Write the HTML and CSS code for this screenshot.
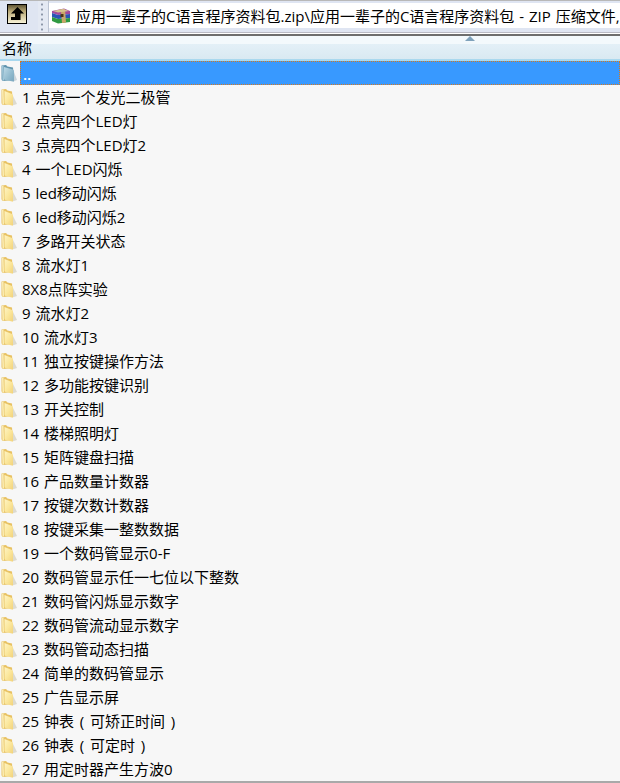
FILE: index.html
```html
<!DOCTYPE html>
<html lang="zh">
<head>
<meta charset="utf-8">
<title>WinRAR</title>
<link rel="stylesheet" href="styles.css">
</head>
<body>
<svg class="defs" width="0" height="0" aria-hidden="true">
  <defs>
    <linearGradient id="fy" x1="0" y1="0" x2="1" y2="1"><stop offset="0" stop-color="#fef4c4"/><stop offset=".5" stop-color="#fbe79c"/><stop offset="1" stop-color="#f2d27a"/></linearGradient>
    <linearGradient id="fb" x1="0" y1="0" x2="1" y2="1"><stop offset="0" stop-color="#bcd9e6"/><stop offset=".6" stop-color="#8fb9cd"/><stop offset="1" stop-color="#7aa6bd"/></linearGradient>
    <symbol id="folder" viewBox="0 0 16 18">
      <path d="M0.500 1.500 L5 1 L6.500 2.500 L11 3.500 L12 16 L2 17 Q0.500 16.500 .5 15 Z" fill="#e8c264"/>
      <path d="M2.500 1.500 L3 16.500 L1.500 16.500 L1 2 Z" fill="#fbeeb8"/>
      <path d="M3.500 3 L11 6 Q12 6.500 12 7.500 L12 17 Q12 18 11 17.600 L4.500 16 Q3.500 15.600 3.500 14.500 Z" fill="url(#fy)"/>
      <path d="M12 8 L16 16 L12 17.200 Z" fill="#d2cfbd" opacity=".7"/>
    </symbol>
    <symbol id="folderup" viewBox="0 0 16 18">
      <path d="M0.500 1.500 L5 1 L6.500 2.500 L12 3.500 L13 16 L2 17 Q0.500 16.500 .5 15 Z" fill="#5f93ad"/>
      <path d="M2.500 1.500 L3 16.500 L1.500 16.500 L1 2 Z" fill="#a6cadb"/>
      <path d="M3 3 L12 5.500 Q13 6 13 7 L13 17 Q13 18 12 17.600 L4 16 Q3 15.600 3 14.500 Z" fill="url(#fb)"/>
      <path d="M13 8 L16 16 L13 17.200 Z" fill="#b9c8d0" opacity=".75"/>
    </symbol>
  </defs>
</svg>
<div class="app">
  <header class="toolbar">
    <div class="up-cell">
      <button class="up-btn" aria-label="向上">
        <svg width="18" height="16" viewBox="0 0 18 16"><path d="M9.500 1 L16 7.500 L12.500 7.500 L12.500 14 L3 14 L3 11 L7 11 L7 7.500 L3 7.500 Z" fill="#000"/></svg>
      </button>
    </div>
    <div class="grip"></div>
    <div class="path">
      <svg class="rar" width="20" height="16" viewBox="0 0 20 16">
        <path d="M1 3 L13 0.500 L19 3 L19 6 L7 7 L1 5 Z" fill="#a34a9c"/>
        <path d="M1 5 L7 7 L19 6 L19 10 L7 11 L1 9 Z" fill="#2b55b5"/>
        <path d="M1 9 L7 11 L19 10 L19 14 L7 15.500 L1 13 Z" fill="#2f9a43"/>
        <path d="M7 2 L14 1 L15 14.500 L11 15 L10 3 Z" fill="#c9a66a"/>
        <path d="M2 3 L12 1 L18 3 L7 4.500 Z" fill="#d6c28e"/>
        <rect x="9.500" y="6" width="3" height="3" fill="#4a3518"/>
      </svg>
      <span class="path-text">应用一辈子的C语言程序资料包.zip\应用一辈子的C语言程序资料包 - ZIP 压缩文件,</span>
    </div>
  </header>
  <div class="rule"></div>
  <div class="head">
    <span class="sort"></span>
    <span class="head-label">名称</span>
  </div>
  <ul class="list">
    <li class="row row-sel"><svg class="ico"><use href="#folderup"/></svg><span class="name">..</span></li>
    <li class="row"><svg class="ico"><use href="#folder"/></svg><span class="name">1 点亮一个发光二极管</span></li>
    <li class="row"><svg class="ico"><use href="#folder"/></svg><span class="name">2 点亮四个LED灯</span></li>
    <li class="row"><svg class="ico"><use href="#folder"/></svg><span class="name">3 点亮四个LED灯2</span></li>
    <li class="row"><svg class="ico"><use href="#folder"/></svg><span class="name">4 一个LED闪烁</span></li>
    <li class="row"><svg class="ico"><use href="#folder"/></svg><span class="name">5 led移动闪烁</span></li>
    <li class="row"><svg class="ico"><use href="#folder"/></svg><span class="name">6 led移动闪烁2</span></li>
    <li class="row"><svg class="ico"><use href="#folder"/></svg><span class="name">7 多路开关状态</span></li>
    <li class="row"><svg class="ico"><use href="#folder"/></svg><span class="name">8 流水灯1</span></li>
    <li class="row"><svg class="ico"><use href="#folder"/></svg><span class="name">8X8点阵实验</span></li>
    <li class="row"><svg class="ico"><use href="#folder"/></svg><span class="name">9 流水灯2</span></li>
    <li class="row"><svg class="ico"><use href="#folder"/></svg><span class="name">10 流水灯3</span></li>
    <li class="row"><svg class="ico"><use href="#folder"/></svg><span class="name">11 独立按键操作方法</span></li>
    <li class="row"><svg class="ico"><use href="#folder"/></svg><span class="name">12 多功能按键识别</span></li>
    <li class="row"><svg class="ico"><use href="#folder"/></svg><span class="name">13 开关控制</span></li>
    <li class="row"><svg class="ico"><use href="#folder"/></svg><span class="name">14 楼梯照明灯</span></li>
    <li class="row"><svg class="ico"><use href="#folder"/></svg><span class="name">15 矩阵键盘扫描</span></li>
    <li class="row"><svg class="ico"><use href="#folder"/></svg><span class="name">16 产品数量计数器</span></li>
    <li class="row"><svg class="ico"><use href="#folder"/></svg><span class="name">17 按键次数计数器</span></li>
    <li class="row"><svg class="ico"><use href="#folder"/></svg><span class="name">18 按键采集一整数数据</span></li>
    <li class="row"><svg class="ico"><use href="#folder"/></svg><span class="name">19 一个数码管显示0-F</span></li>
    <li class="row"><svg class="ico"><use href="#folder"/></svg><span class="name">20 数码管显示任一七位以下整数</span></li>
    <li class="row"><svg class="ico"><use href="#folder"/></svg><span class="name">21 数码管闪烁显示数字</span></li>
    <li class="row"><svg class="ico"><use href="#folder"/></svg><span class="name">22 数码管流动显示数字</span></li>
    <li class="row"><svg class="ico"><use href="#folder"/></svg><span class="name">23 数码管动态扫描</span></li>
    <li class="row"><svg class="ico"><use href="#folder"/></svg><span class="name">24 简单的数码管显示</span></li>
    <li class="row"><svg class="ico"><use href="#folder"/></svg><span class="name">25 广告显示屏</span></li>
    <li class="row"><svg class="ico"><use href="#folder"/></svg><span class="name">25 钟表<span class="paren">(</span>可矫正时间<span class="paren">)</span></span></li>
    <li class="row"><svg class="ico"><use href="#folder"/></svg><span class="name">26 钟表<span class="paren">(</span>可定时<span class="paren">)</span></span></li>
    <li class="row"><svg class="ico"><use href="#folder"/></svg><span class="name">27 用定时器产生方波0</span></li>
  </ul>
  <div class="status"></div>
</div>
</body>
</html>
```
FILE: styles.css
```css
* { box-sizing: border-box; }
html, body { margin: 0; padding: 0; height: 100%; }
body {
  width: 620px;
  height: 783px;
  overflow: hidden;
  background: #f7f7f7;
  font-family: "Open Sans", "Noto Sans CJK SC", sans-serif;
  font-size: 15px;
  word-spacing: 1px;
  color: #000;
}
.defs { position: absolute; }
.app { display: flex; flex-direction: column; height: 783px; overflow: hidden; }
.toolbar {
  display: flex;
  height: 32px;
  flex: none;
  background: #dfe5f2;
  border-top: 1px solid #b8b8b8;
}
.up-cell { width: 38px; display: flex; align-items: flex-start; padding: 3px 0 0 7px; }
.up-btn {
  width: 20px;
  height: 20px;
  margin: 0;
  padding: 0;
  border: 1px solid #000;
  background: linear-gradient(#5f5535, #b8a876 35%, #f7f2d6);
  display: flex;
  align-items: center;
  justify-content: center;
}
.grip {
  width: 11px;
  background: #e4e9f3 radial-gradient(circle, #8c96a8 1px, transparent 1.2px) 2px 1px / 4px 5px repeat-y;
  border-right: 1px solid #bcc4d3;
}
.path {
  flex: 1;
  min-width: 0;
  height: 25px;
  margin-top: 2px;
  background: #fff;
  display: flex;
  align-items: center;
  white-space: nowrap;
  overflow: hidden;
  padding-left: 2px;
}
.rar { flex: none; margin-right: 5px; }
.path-text { font-size: 15px; line-height: 20px; }
.rule {
  height: 4px;
  flex: none;
  background: #fff;
  border-top: 1px solid #b9bac4;
  border-bottom: 2px solid #6d6d6d;
}
.head {
  position: relative;
  height: 25px;
  flex: none;
  padding: 1px 0 0 2px;
  display: flex;
  align-items: center;
  background: linear-gradient(#f3f9fc 0, #f3f9fc 8px, #e3f0f7 8px, #d9e9f2 100%);
  border-bottom: 2px solid #a9d8ee;
}
.head-label { font-size: 15px; line-height: 20px; }
.sort {
  position: absolute;
  left: 465px;
  top: 0;
  width: 0;
  height: 0;
  border-left: 5px solid transparent;
  border-right: 5px solid transparent;
  border-bottom: 5px solid #7fa2bb;
}
.list { list-style: none; margin: 0; padding: 0; flex: none; }
.row {
  height: 24px;
  display: flex;
  align-items: center;
  white-space: nowrap;
}
.ico { width: 16px; height: 18px; flex: none; margin: 0 3px 0 1px; }
.name { line-height: 20px; padding-left: 2px; }
.paren { display: inline-block; width: 16px; text-align: center; }
.row-sel .name {
  flex: 1;
  align-self: stretch;
  margin-left: 0;
  padding-left: 2px;
  line-height: 24px;
  font-weight: 600;
  background: #3899ff;
  color: #fff;
  border: 1px dotted #d9791c;
}
.status {
  margin-top: auto;
  height: 6px;
  flex: none;
  background: #f0f0f0;
  border-top: 2px solid #a9a9a9;
  border-bottom: 1px solid #a9a9a9;
}
```
